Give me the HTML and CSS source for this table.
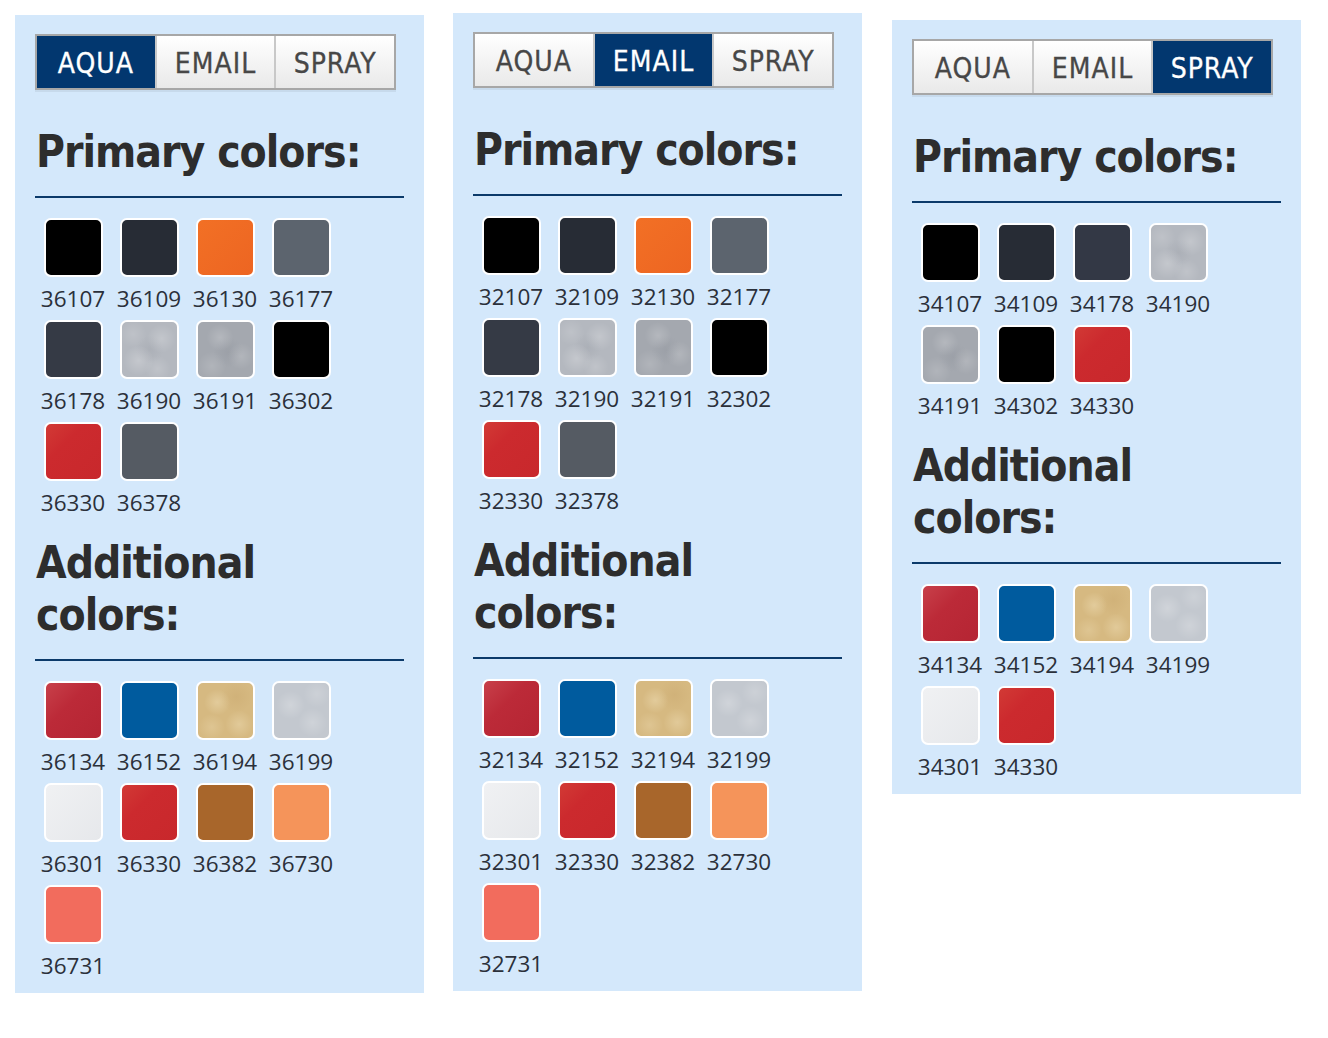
FILE: index.html
```html
<!DOCTYPE html>
<html lang="en">
<head>
<meta charset="utf-8">
<title>Colors</title>
<link rel="stylesheet" href="styles.css">
</head>
<body>
<div class="board">
  <section class="panel panel-a">
    <div class="tabs">
      <span class="tab active">AQUA</span><span class="tab">EMAIL</span><span class="tab">SPRAY</span>
    </div>
    <h2 class="heading">Primary colors:</h2>
    <div class="grid">
      <div class="item"><div class="sw c-black"></div><div class="num">36107</div></div>
      <div class="item"><div class="sw c-graphite"></div><div class="num">36109</div></div>
      <div class="item"><div class="sw c-orange"></div><div class="num">36130</div></div>
      <div class="item"><div class="sw c-grey"></div><div class="num">36177</div></div>
      <div class="item"><div class="sw c-slate"></div><div class="num">36178</div></div>
      <div class="item"><div class="sw c-silver"></div><div class="num">36190</div></div>
      <div class="item"><div class="sw c-silver-dark"></div><div class="num">36191</div></div>
      <div class="item"><div class="sw c-black"></div><div class="num">36302</div></div>
      <div class="item"><div class="sw c-red"></div><div class="num">36330</div></div>
      <div class="item"><div class="sw c-steel"></div><div class="num">36378</div></div>
    </div>
    <h2 class="heading heading-add">Additional<br>colors:</h2>
    <div class="grid">
      <div class="item"><div class="sw c-crimson"></div><div class="num">36134</div></div>
      <div class="item"><div class="sw c-blue"></div><div class="num">36152</div></div>
      <div class="item"><div class="sw c-gold"></div><div class="num">36194</div></div>
      <div class="item"><div class="sw c-silver-light"></div><div class="num">36199</div></div>
      <div class="item"><div class="sw c-white"></div><div class="num">36301</div></div>
      <div class="item"><div class="sw c-red"></div><div class="num">36330</div></div>
      <div class="item"><div class="sw c-brown"></div><div class="num">36382</div></div>
      <div class="item"><div class="sw c-apricot"></div><div class="num">36730</div></div>
      <div class="item"><div class="sw c-salmon"></div><div class="num">36731</div></div>
    </div>
  </section>

  <section class="panel panel-b">
    <div class="tabs">
      <span class="tab">AQUA</span><span class="tab active">EMAIL</span><span class="tab">SPRAY</span>
    </div>
    <h2 class="heading">Primary colors:</h2>
    <div class="grid">
      <div class="item"><div class="sw c-black"></div><div class="num">32107</div></div>
      <div class="item"><div class="sw c-graphite"></div><div class="num">32109</div></div>
      <div class="item"><div class="sw c-orange"></div><div class="num">32130</div></div>
      <div class="item"><div class="sw c-grey"></div><div class="num">32177</div></div>
      <div class="item"><div class="sw c-slate"></div><div class="num">32178</div></div>
      <div class="item"><div class="sw c-silver"></div><div class="num">32190</div></div>
      <div class="item"><div class="sw c-silver-dark"></div><div class="num">32191</div></div>
      <div class="item"><div class="sw c-black"></div><div class="num">32302</div></div>
      <div class="item"><div class="sw c-red"></div><div class="num">32330</div></div>
      <div class="item"><div class="sw c-steel"></div><div class="num">32378</div></div>
    </div>
    <h2 class="heading heading-add">Additional<br>colors:</h2>
    <div class="grid">
      <div class="item"><div class="sw c-crimson"></div><div class="num">32134</div></div>
      <div class="item"><div class="sw c-blue"></div><div class="num">32152</div></div>
      <div class="item"><div class="sw c-gold"></div><div class="num">32194</div></div>
      <div class="item"><div class="sw c-silver-light"></div><div class="num">32199</div></div>
      <div class="item"><div class="sw c-white"></div><div class="num">32301</div></div>
      <div class="item"><div class="sw c-red"></div><div class="num">32330</div></div>
      <div class="item"><div class="sw c-brown"></div><div class="num">32382</div></div>
      <div class="item"><div class="sw c-apricot"></div><div class="num">32730</div></div>
      <div class="item"><div class="sw c-salmon"></div><div class="num">32731</div></div>
    </div>
  </section>

  <section class="panel panel-c">
    <div class="tabs">
      <span class="tab">AQUA</span><span class="tab">EMAIL</span><span class="tab active">SPRAY</span>
    </div>
    <h2 class="heading">Primary colors:</h2>
    <div class="grid">
      <div class="item"><div class="sw c-black"></div><div class="num">34107</div></div>
      <div class="item"><div class="sw c-graphite"></div><div class="num">34109</div></div>
      <div class="item"><div class="sw c-slate2"></div><div class="num">34178</div></div>
      <div class="item"><div class="sw c-silver"></div><div class="num">34190</div></div>
      <div class="item"><div class="sw c-silver-dark"></div><div class="num">34191</div></div>
      <div class="item"><div class="sw c-black"></div><div class="num">34302</div></div>
      <div class="item"><div class="sw c-red"></div><div class="num">34330</div></div>
    </div>
    <h2 class="heading heading-add">Additional<br>colors:</h2>
    <div class="grid">
      <div class="item"><div class="sw c-crimson"></div><div class="num">34134</div></div>
      <div class="item"><div class="sw c-blue"></div><div class="num">34152</div></div>
      <div class="item"><div class="sw c-gold"></div><div class="num">34194</div></div>
      <div class="item"><div class="sw c-silver-light"></div><div class="num">34199</div></div>
      <div class="item"><div class="sw c-white"></div><div class="num">34301</div></div>
      <div class="item"><div class="sw c-red"></div><div class="num">34330</div></div>
    </div>
  </section>
</div>
</body>
</html>
```

FILE: styles.css
```css
html, body {
  margin: 0;
  padding: 0;
  background: #ffffff;
}

.board {
  display: flex;
  align-items: flex-start;
  gap: 29px;
  padding-left: 15px;
}

.panel {
  width: 409px;
  box-sizing: border-box;
  background: #d4e8fb;
  padding: 19px 20px 6px 20px;
}

.panel-a { margin-top: 15px; }
.panel-b { margin-top: 13px; }
.panel-c { margin-top: 20px; margin-left: 1px; }

.tabs {
  display: flex;
  width: 361px;
  height: 56px;
  box-sizing: border-box;
  border: 2px solid #a7a7a7;
  box-shadow: 0 2px 0 rgba(0, 0, 0, 0.06);
}

.tab {
  flex: 1 1 0;
  display: flex;
  align-items: center;
  justify-content: center;
  padding-top: 2px;
  font-family: "DejaVu Sans Condensed", "DejaVu Sans", sans-serif;
  font-stretch: condensed;
  font-size: 28px;
  letter-spacing: 1px;
  color: #474747;
  background: linear-gradient(#ffffff, #e9e9e9);
  border-left: 2px solid #c8c8c8;
  -webkit-text-stroke: 0.3px currentColor;
}

.tab:first-child {
  border-left: none;
}

.tab.active {
  background: #02376f;
  color: #ffffff;
}

.heading {
  margin: 36px 0 0 0;
  padding: 0 0 18px 1px;
  border-bottom: 2px solid #0b3a6a;
  font-family: "DejaVu Sans Condensed", "DejaVu Sans", sans-serif;
  font-stretch: condensed;
  font-weight: bold;
  font-size: 44px;
  line-height: 52px;
  letter-spacing: -1px;
  color: #2d2d2d;
}

.heading-add {
  margin-top: 13px;
}

.grid {
  display: grid;
  grid-template-columns: repeat(4, 76px);
  margin-top: 20px;
}

.item {
  display: flex;
  flex-direction: column;
  align-items: center;
}

.sw {
  width: 55px;
  height: 55px;
  border: 2px solid #ffffff;
  border-radius: 7px;
  background: #000000;
}

.num {
  padding: 7px 0 6px 0;
  font-family: "Open Sans", "Noto Sans", sans-serif;
  font-size: 22.5px;
  line-height: 30px;
  color: #2b303a;
}

/* swatch colours */
.c-black { background: #000000; }
.c-graphite { background: #272c35; }
.c-orange { background: linear-gradient(135deg, #f27025, #ed6522); }
.c-grey { background: #5c646e; }
.c-slate { background: #353a45; }
.c-slate2 { background: #333845; }
.c-steel { background: #555b63; }
.c-red { background: linear-gradient(135deg, #d23a35 0%, #cc2a2e 35%, #c8282c 100%); }
.c-crimson { background: linear-gradient(135deg, #c8404a 0%, #bc2a38 40%, #b52533 100%); }
.c-blue { background: #005b9e; }
.c-white { background: linear-gradient(135deg, #f0f1f3, #e6e8eb); }
.c-brown { background: #a8662b; }
.c-apricot { background: #f5945a; }
.c-salmon { background: #f26c5d; }

.c-silver {
  background:
    radial-gradient(circle at 30% 70%, rgba(255, 255, 255, 0.22) 0, rgba(255, 255, 255, 0) 28%),
    radial-gradient(circle at 72% 30%, rgba(255, 255, 255, 0.2) 0, rgba(255, 255, 255, 0) 26%),
    radial-gradient(circle at 65% 85%, rgba(255, 255, 255, 0.16) 0, rgba(255, 255, 255, 0) 22%),
    radial-gradient(circle at 20% 22%, rgba(255, 255, 255, 0.14) 0, rgba(255, 255, 255, 0) 22%),
    radial-gradient(circle at 50% 50%, rgba(130, 135, 145, 0.16) 0, rgba(130, 135, 145, 0) 35%),
    #b4b8bf;
}

.c-silver-dark {
  background:
    radial-gradient(circle at 40% 28%, rgba(255, 255, 255, 0.18) 0, rgba(255, 255, 255, 0) 26%),
    radial-gradient(circle at 78% 62%, rgba(255, 255, 255, 0.16) 0, rgba(255, 255, 255, 0) 24%),
    radial-gradient(circle at 25% 80%, rgba(255, 255, 255, 0.14) 0, rgba(255, 255, 255, 0) 24%),
    radial-gradient(circle at 55% 55%, rgba(120, 125, 135, 0.18) 0, rgba(120, 125, 135, 0) 35%),
    #a4a8af;
}

.c-silver-light {
  background:
    radial-gradient(circle at 30% 40%, rgba(255, 255, 255, 0.22) 0, rgba(255, 255, 255, 0) 28%),
    radial-gradient(circle at 70% 72%, rgba(255, 255, 255, 0.2) 0, rgba(255, 255, 255, 0) 26%),
    radial-gradient(circle at 78% 20%, rgba(255, 255, 255, 0.16) 0, rgba(255, 255, 255, 0) 22%),
    #c3c8cf;
}

.c-gold {
  background:
    radial-gradient(circle at 35% 35%, rgba(255, 245, 215, 0.3) 0, rgba(255, 245, 215, 0) 26%),
    radial-gradient(circle at 75% 75%, rgba(255, 245, 215, 0.28) 0, rgba(255, 245, 215, 0) 24%),
    radial-gradient(circle at 25% 80%, rgba(255, 245, 215, 0.2) 0, rgba(255, 245, 215, 0) 22%),
    radial-gradient(circle at 70% 25%, rgba(180, 140, 80, 0.16) 0, rgba(180, 140, 80, 0) 28%),
    #d6b981;
}
```
